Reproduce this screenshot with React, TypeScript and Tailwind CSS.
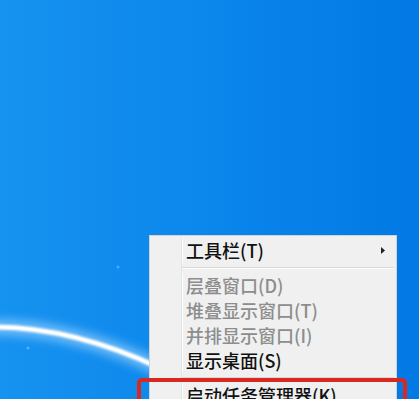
const font = { fontFamily: '"Noto Sans CJK SC", "Noto Sans", sans-serif' };

type Item = { label: string; disabled?: boolean; submenu?: boolean };

const groups: Item[][] = [
  [{ label: '工具栏(T)', submenu: true }],
  [
    { label: '层叠窗口(D)', disabled: true },
    { label: '堆叠显示窗口(T)', disabled: true },
    { label: '并排显示窗口(I)', disabled: true },
    { label: '显示桌面(S)' },
  ],
  [{ label: '启动任务管理器(K)' }],
];

function MenuRow({ item }: { item: Item }) {
  return (
    <div className="flex h-[25px] items-center">
      <div className="h-full w-[31px] shrink-0" />
      <div className="h-full w-px shrink-0 bg-[#e2e3e3]" />
      <div className="h-full w-px shrink-0 bg-white" />
      <span
        className={`flex-1 pl-[3px] text-[18px] font-medium leading-[25px] ${
          item.disabled ? 'text-[#8d8d8d]' : 'text-[#111]'
        }`}
      >
        {item.label}
      </span>
      {item.submenu && (
        <svg className="mr-[11px] h-[7px] w-[4px]" viewBox="0 0 4 7">
          <path d="M0 0 L4 3.5 L0 7 Z" fill="#222" />
        </svg>
      )}
    </div>
  );
}

function Separator() {
  return (
    <div className="flex h-[10px]">
      <div className="h-full w-[31px] shrink-0" />
      <div className="h-full w-px shrink-0 bg-[#e2e3e3]" />
      <div className="flex flex-1 flex-col justify-center pr-[2px]">
        <div className="h-px bg-[#d7d7d7]" />
        <div className="h-px bg-white" />
      </div>
    </div>
  );
}

export default function App() {
  return (
    <div
      className="relative h-[399px] w-[419px] overflow-hidden bg-gradient-to-r from-[#1692f0] via-[#0b86eb] to-[#0279e4]"
      style={font}
    >
      {/* wallpaper glow streak */}
      <svg className="absolute inset-0" width="419" height="399" viewBox="0 0 419 399">
        <defs>
          <filter id="glow" x="-20%" y="-50%" width="140%" height="200%">
            <feGaussianBlur stdDeviation="5" />
          </filter>
          <filter id="soft" x="-20%" y="-50%" width="140%" height="200%">
            <feGaussianBlur stdDeviation="1.2" />
          </filter>
        </defs>
        <path d="M-10 327 Q 70 326 160 368" stroke="#a6d8ff" strokeWidth="16" fill="none" opacity="0.6" filter="url(#glow)" />
        <path d="M-10 327 Q 70 326 160 368" stroke="#ffffff" strokeWidth="5" fill="none" filter="url(#soft)" />
        <path d="M-10 327 Q 70 326 160 368" stroke="#ffffff" strokeWidth="2" fill="none" />
        <circle cx="28" cy="348" r="1.5" fill="#6cc0ff" opacity="0.7" />
        <circle cx="118" cy="267" r="1.5" fill="#6cc0ff" opacity="0.6" />
      </svg>

      {/* context menu */}
      <div className="absolute left-[149px] top-[235px] w-[248px] border border-[#cfd3d6] bg-[#f0f0f0] pt-[2px]">
        {groups.map((group, gi) => (
          <div key={gi}>
            {gi > 0 && <Separator />}
            {group.map((item) => (
              <MenuRow key={item.label} item={item} />
            ))}
          </div>
        ))}
      </div>

      {/* highlight box */}
      <div className="absolute left-[137px] top-[378px] h-[40px] w-[270px] rounded-[5px] border-[4px] border-[#d8281f]" />
    </div>
  );
}
